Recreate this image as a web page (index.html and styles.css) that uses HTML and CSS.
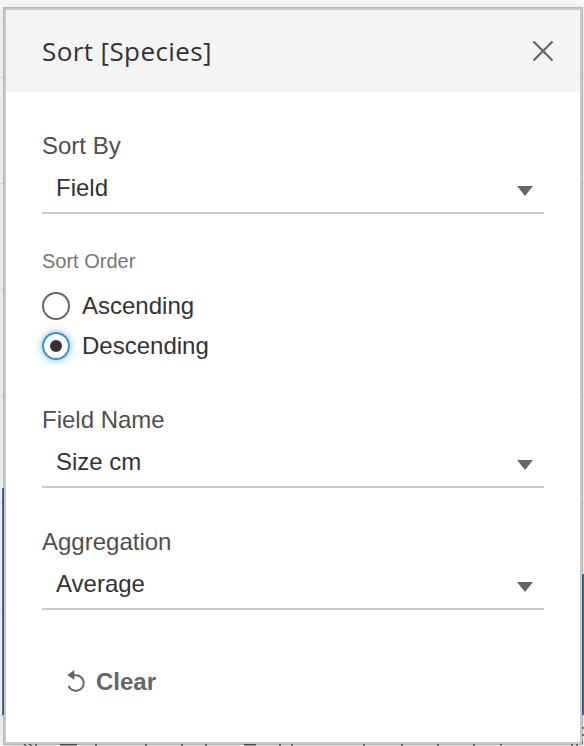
FILE: index.html
```html
<!DOCTYPE html>
<html lang="en">
<head>
<meta charset="utf-8">
<title>Sort [Species]</title>
<link rel="stylesheet" href="styles.css">
</head>
<body>
<svg class="sheet" width="584" height="746" viewBox="0 0 584 746" aria-hidden="true">
  <path d="M0 77.5H584M0 183.5H584M0 289.5H584M0 395.5H584M0 503.5H584M0 609.5H584M0 715.5H584" stroke="#dedede"/>
  <path d="M2 488h4v227H2zM580 574h4v141h-4z" fill="#4a74a8"/>
  <path d="M24 744l2 2M29 744l3 2M36 744v2M60 744.7h17M96 744v2M146 744v2M182 744v2M206 744v2M244 744.7h12M280 744v2M292 744v2M364 744v2M402 744v2M438 744v2M474 744v2M500 744.7h2M572 744v2M577 744v2M582 728h2M582 735h2M582 741v3" stroke="#666" stroke-width="1.5" fill="none"/>
</svg>
<main class="dialog">
  <header class="header">
    <h1 class="title">Sort [Species]</h1>
    <svg class="close" width="22" height="22" viewBox="0 0 22 22"><path d="M1.5 1.500l19 19M20.500 1.500l-19 19" stroke="#666" stroke-width="2.2"/></svg>
  </header>
  <div class="body">
    <section class="field">
      <div class="label">Sort By</div>
      <div class="select"><span>Field</span><svg width="16" height="10" viewBox="0 0 16 10"><path d="M0 0H16L8 10z" fill="#666"/></svg></div>
    </section>
    <section class="order">
      <div class="caption">Sort Order</div>
      <div class="option"><span class="radio"></span>Ascending</div>
      <div class="option"><span class="radio checked"></span>Descending</div>
    </section>
    <section class="field">
      <div class="label">Field Name</div>
      <div class="select"><span>Size cm</span><svg width="16" height="10" viewBox="0 0 16 10"><path d="M0 0H16L8 10z" fill="#666"/></svg></div>
    </section>
    <section class="field second">
      <div class="label">Aggregation</div>
      <div class="select"><span>Average</span><svg width="16" height="10" viewBox="0 0 16 10"><path d="M0 0H16L8 10z" fill="#666"/></svg></div>
    </section>
    <div class="clear">
      <svg width="18" height="24" viewBox="0 0 18 24"><path d="M5 7.200H9A7.800 7.800 0 1 1 1.600 17.800" fill="none" stroke="#666" stroke-width="2"/><path d="M0.300 7L7.300 2V12z" fill="#666"/></svg>
      <span>Clear</span>
    </div>
  </div>
</main>
</body>
</html>
```

FILE: styles.css
```css
* { box-sizing: border-box; }
body {
  margin: 0;
  height: 746px;
  overflow: hidden;
  position: relative;
  padding: 8px 2px 2px 4px;
  background: #f7f7f7;
  font: 24px/28px "Liberation Sans", Arial, sans-serif;
  color: #333;
}
.sheet { position: absolute; left: 0; top: 0; }
.dialog {
  position: relative;
  height: 736px;
  border: 2px solid #c9c9c9;
  background: #fff;
  box-shadow: 0 0 0 1px rgba(0,0,0,.22), 0 2px 12px rgba(0,0,0,.12);
}
.header {
  height: 82px;
  padding: 0 26px 0 36px;
  display: flex;
  align-items: center;
  justify-content: space-between;
  background: #f4f4f4;
}
.title {
  margin: 0;
  font: 400 26px/36px "Open Sans", sans-serif;
  letter-spacing: .4px;
}
.body { padding: 40px 36px 0; }
.label { color: #4f4f4f; }
.select {
  display: flex;
  justify-content: space-between;
  height: 54px;
  padding: 14px 11px 0 14px;
  border-bottom: 2px solid #c9c9c9;
}
.select svg { margin-top: 12px; }
.order { padding: 35px 0 46px; }
.caption {
  margin-bottom: 19px;
  font-size: 20px;
  line-height: 24px;
  color: #777;
}
.option { display: flex; gap: 12px; }
.option + .option { margin-top: 12px; }
.radio {
  display: grid;
  place-items: center;
  width: 28px;
  height: 28px;
  border: 2px solid #666;
  border-radius: 50%;
}
.checked { border-color: #2e93dc; box-shadow: 0 0 8px rgba(46,147,220,.6); }
.checked::before {
  content: "";
  width: 12px;
  height: 12px;
  border-radius: 50%;
  background: #333;
}
.second { margin-top: 40px; }
.clear {
  display: flex;
  gap: 11px;
  padding: 58px 0 0 25px;
  font-weight: 700;
  color: #666;
}
```
